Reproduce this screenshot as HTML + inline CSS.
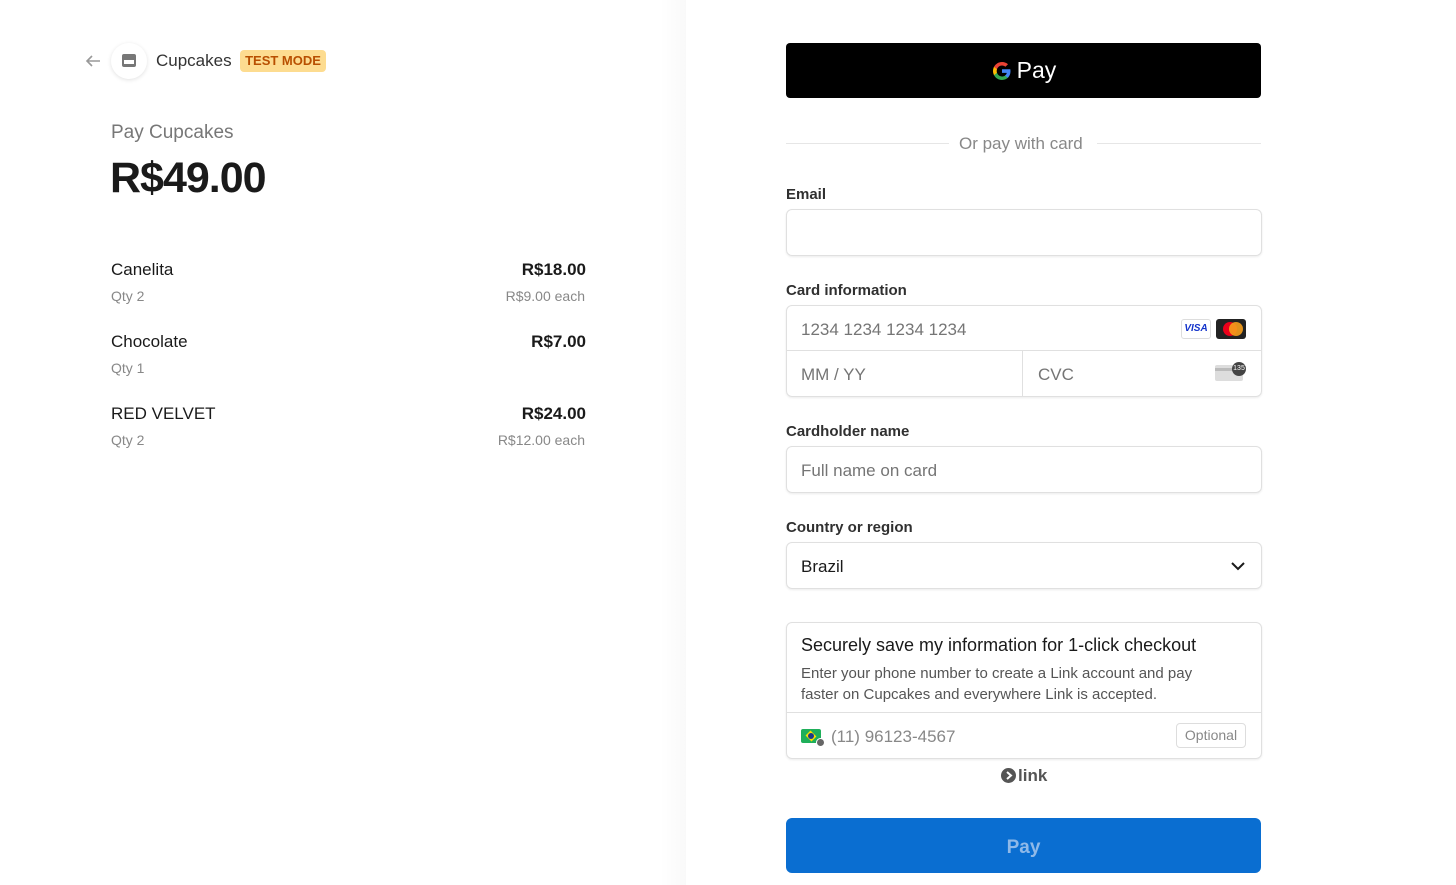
<!DOCTYPE html>
<html><head><meta charset="utf-8"><style>
*{box-sizing:border-box;margin:0;padding:0}
body{width:1456px;height:885px;position:relative;background:#fff;font-family:"Liberation Sans",sans-serif;color:#1a1a1a;overflow:hidden}
.abs{position:absolute}
.shadow{left:660px;top:0;width:26px;height:885px;background:linear-gradient(to right,rgba(0,0,0,0),rgba(0,0,0,0.025))}
.lbl{font-size:15px;color:#303030;font-weight:bold;left:786px}
.inp{left:786px;width:476px;border:1px solid #e0e0e0;border-radius:6px;box-shadow:0 1px 2px rgba(0,0,0,.08);font-size:17px;color:#757575;padding-left:14px;display:flex;align-items:center}
.item{font-size:17px;color:#1a1a1a}
.sub{font-size:14px;color:#888}
</style></head><body>
<div class="abs shadow"></div>
<svg class="abs" style="left:84px;top:52px" width="18" height="18" viewBox="0 0 18 18"><path d="M16 9H3M8 4L3 9l5 5" stroke="#999" stroke-width="1.6" fill="none"/></svg>
<div class="abs" style="left:111px;top:43px;width:36px;height:36px;border-radius:50%;background:#fff;box-shadow:0 1px 4px rgba(0,0,0,.12)"></div>
<div class="abs" style="left:122px;top:54px;width:14px;height:13px;background:#777;border-radius:2px"></div>
<div class="abs" style="left:124px;top:60px;width:10px;height:4px;background:#fff"></div>
<div class="abs" style="left:156px;top:51px;font-size:17px;color:#333">Cupcakes</div>
<div class="abs" style="left:240px;top:50px;height:22px;width:86px;background:#fddc90;border-radius:4px;color:#b84f00;font-weight:bold;font-size:13px;line-height:22px;text-align:center">TEST MODE</div>
<div class="abs" style="left:111px;top:122px;font-size:19px;color:#777">Pay Cupcakes</div>
<div class="abs" style="left:110px;top:154px;font-size:43px;font-weight:bold;color:#1a1a1a;letter-spacing:-1px">R$49.00</div>

<div class="abs item" style="left:111px;top:260px">Canelita</div>
<div class="abs sub" style="left:111px;top:288px">Qty 2</div>
<div class="abs item" style="right:870px;top:260px;font-weight:bold">R$18.00</div>
<div class="abs sub" style="right:871px;top:288px">R$9.00 each</div>
<div class="abs item" style="left:111px;top:332px">Chocolate</div>
<div class="abs sub" style="left:111px;top:360px">Qty 1</div>
<div class="abs item" style="right:870px;top:332px;font-weight:bold">R$7.00</div>
<div class="abs item" style="left:111px;top:404px">RED VELVET</div>
<div class="abs sub" style="left:111px;top:432px">Qty 2</div>
<div class="abs item" style="right:870px;top:404px;font-weight:bold">R$24.00</div>
<div class="abs sub" style="right:871px;top:432px">R$12.00 each</div>

<div class="abs" style="left:786px;top:43px;width:475px;height:55px;background:#000;border-radius:4px;color:#fff;font-size:23px;display:flex;align-items:center;justify-content:center">
<svg width="22" height="22" viewBox="0 0 22 22" style="margin-right:4px"><path d="M19.5 11.2c0-.7-.1-1.3-.2-1.9H11v3.6h4.8c-.2 1.1-.8 2-1.8 2.6v2.2h2.9c1.7-1.6 2.6-3.9 2.6-6.5z" fill="#4285f4"/><path d="M11 20c2.4 0 4.4-.8 5.900-2.2l-2.9-2.2c-.8.5-1.8.9-3 .9-2.3 0-4.3-1.6-5-3.7H3v2.3C4.5 18 7.5 20 11 20z" fill="#34a853"/><path d="M6 12.8c-.2-.5-.3-1.1-.3-1.8s.1-1.2.3-1.8V6.9H3C2.4 8.1 2 9.5 2 11s.4 2.9 1 4.1l3-2.3z" fill="#fbbc04"/><path d="M11 5.5c1.3 0 2.5.5 3.4 1.3l2.6-2.6C15.4 2.8 13.4 2 11 2 7.5 2 4.5 4 3 6.9l3 2.3c.7-2.1 2.7-3.7 5-3.7z" fill="#ea4335"/></svg>Pay</div>

<div class="abs" style="left:786px;top:143px;width:163px;height:1px;background:#e6e6e6"></div>
<div class="abs" style="left:1097px;top:143px;width:164px;height:1px;background:#e6e6e6"></div>
<div class="abs" style="left:959px;top:134px;font-size:17px;color:#888">Or pay with card</div>

<div class="abs lbl" style="top:186px">Email</div>
<div class="abs inp" style="top:209px;height:47px"></div>

<div class="abs lbl" style="top:282px">Card information</div>
<div class="abs" style="left:786px;top:305px;width:476px;height:92px;border:1px solid #e0e0e0;border-radius:6px;box-shadow:0 1px 2px rgba(0,0,0,.08)"></div>
<div class="abs" style="left:786px;top:350px;width:476px;height:1px;background:#e0e0e0"></div>
<div class="abs" style="left:1022px;top:350px;width:1px;height:47px;background:#e0e0e0"></div>
<div class="abs" style="left:801px;top:320px;font-size:17px;color:#757575">1234 1234 1234 1234</div>
<div class="abs" style="left:801px;top:365px;font-size:17px;color:#757575">MM / YY</div>
<div class="abs" style="left:1038px;top:365px;font-size:17px;color:#757575">CVC</div>
<div class="abs" style="left:1181px;top:319px;width:30px;height:20px;border:1px solid #ddd;border-radius:3px;color:#1434cb;font-weight:bold;font-style:italic;font-size:10px;line-height:18px;text-align:center">VISA</div>
<div class="abs" style="left:1216px;top:319px;width:30px;height:20px;background:#222;border-radius:3px"></div>
<div class="abs" style="left:1223px;top:322px;width:14px;height:14px;border-radius:50%;background:#eb001b"></div>
<div class="abs" style="left:1229px;top:322px;width:14px;height:14px;border-radius:50%;background:#f79e1b;opacity:.9"></div>
<div class="abs" style="left:1215px;top:365px;width:28px;height:16px;background:#ddd;border-radius:2px"></div>
<div class="abs" style="left:1215px;top:368px;width:28px;height:3px;background:#bbb"></div>
<div class="abs" style="left:1232px;top:362px;width:14px;height:14px;border-radius:50%;background:#444;color:#fff;font-size:7px;line-height:14px;text-align:center">135</div>

<div class="abs lbl" style="top:423px">Cardholder name</div>
<div class="abs inp" style="top:446px;height:47px;padding-top:2px">Full name on card</div>

<div class="abs lbl" style="top:519px">Country or region</div>
<div class="abs inp" style="top:542px;height:47px;color:#1a1a1a;padding-top:2px">Brazil</div>
<svg class="abs" style="left:1230px;top:560px" width="16" height="12" viewBox="0 0 16 12"><path d="M2 3l6 6 6-6" stroke="#1a1a1a" stroke-width="2" fill="none"/></svg>

<div class="abs" style="left:786px;top:622px;width:476px;height:137px;border:1px solid #e0e0e0;border-radius:6px;box-shadow:0 1px 2px rgba(0,0,0,.08)"></div>
<div class="abs" style="left:786px;top:712px;width:476px;height:1px;background:#e0e0e0"></div>
<div class="abs" style="left:801px;top:635px;font-size:18px;color:#1a1a1a">Securely save my information for 1-click checkout</div>
<div class="abs" style="left:801px;top:663px;font-size:15px;color:#555;line-height:21px;width:425px">Enter your phone number to create a Link account and pay faster on Cupcakes and everywhere Link is accepted.</div>
<div class="abs" style="left:801px;top:729px;width:20px;height:14px;background:#1faf5a;border-radius:2px"></div>
<div class="abs" style="left:805px;top:731px;width:12px;height:10px;background:#fedf00;transform:rotate(45deg) scale(.7)"></div>
<div class="abs" style="left:808px;top:733px;width:6px;height:6px;border-radius:50%;background:#1e3a8a"></div>
<div class="abs" style="left:816px;top:738px;width:9px;height:9px;border-radius:50%;background:#666;border:1px solid #fff"></div>
<div class="abs" style="left:831px;top:727px;font-size:17px;color:#888">(11) 96123-4567</div>
<div class="abs" style="left:1176px;top:723px;width:70px;height:25px;border:1px solid #ddd;border-radius:4px;font-size:14px;color:#888;text-align:center;line-height:23px">Optional</div>
<div class="abs" style="left:1001px;top:768px;width:15px;height:15px;border-radius:50%;background:#555"></div>
<svg class="abs" style="left:1001px;top:768px" width="15" height="15"><path d="M6 4l4 3.5L6 11" stroke="#fff" stroke-width="2" fill="none"/></svg>
<div class="abs" style="left:1018px;top:766px;font-size:17px;font-weight:bold;color:#555">link</div>

<div class="abs" style="left:786px;top:818px;width:475px;height:55px;background:#0a6ed1;border-radius:6px;color:#8fb9e8;font-size:19px;font-weight:bold;display:flex;align-items:center;justify-content:center;padding-top:4px">Pay</div>
</body></html>
